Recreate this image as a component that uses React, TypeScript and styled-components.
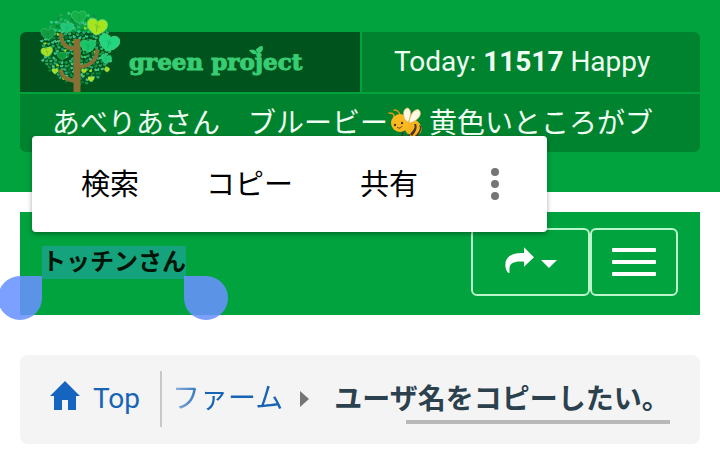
import React from "react";
import styled, { createGlobalStyle } from "styled-components";

const GlobalStyle = createGlobalStyle`
  *, *::before, *::after { box-sizing: border-box; }
  body {
    margin: 0;
    background: #fff;
    color: #000;
    font-family: Roboto, "Noto Sans CJK JP", sans-serif;
    font-size: 28px;
    line-height: 40px;
    overflow-x: hidden;
  }
  button { font: inherit; color: inherit; margin: 0; cursor: pointer; }
  svg { display: block; flex: none; }
`;

const Page = styled.div`
  position: relative;
`;

const Header = styled.header`
  background: #00a33e;
  padding: 32px 20px 40px;
`;

const Panel = styled.div`
  display: grid;
  grid-template-columns: 1fr 1fr;
  grid-template-rows: 60px 58px;
  gap: 2px;
  border-radius: 6px;
  color: #effff2;
`;

const panelColor = "#00832f";

const Brand = styled.a`
  display: flex;
  align-items: flex-end;
  gap: 9px;
  height: 60px;
  padding-left: 20px;
  margin-right: -1px;
  background: #00531d;
  border-top-left-radius: 6px;
  text-decoration: none;
`;

const BrandName = styled.span`
  position: relative;
  height: 60px;
  color: #39cd73;
  font: bold 23px/60px "DejaVu Serif", serif;
  -webkit-text-stroke: 1px #39cd73;
  white-space: nowrap;
`;

const Sprout = styled.svg`
  position: absolute;
  left: 69%;
  top: 13px;
`;

const Counter = styled.div`
  margin-left: 1px;
  padding: 0 32px;
  line-height: 60px;
  background: ${panelColor};
  border-top-right-radius: 6px;
  white-space: nowrap;
  overflow: hidden;
`;

const Ticker = styled.div`
  grid-column: 1 / -1;
  display: flex;
  align-items: center;
  padding: 2px 32px 0;
  background: ${panelColor};
  border-radius: 0 0 6px 6px;
  white-space: pre;
  overflow: hidden;
`;

const Main = styled.main`
  padding: 20px;
`;

const NavBar = styled.nav`
  display: flex;
  justify-content: space-between;
  padding: 16px 22px 19px;
  background: #00a33e;
`;

const Selection = styled.span`
  position: relative;
  align-self: flex-start;
  margin-top: 18px;
  background: #15a37d;
  color: #001407;
  font-size: 24px;
  font-weight: 700;
  line-height: 33px;
  white-space: nowrap;
`;

const Handle = styled.span<{ $side: "start" | "end" }>`
  position: absolute;
  top: 30px;
  ${(p) => (p.$side === "start" ? "right: 100%;" : "left: 100%; margin-left: -2px;")}
  width: 44px;
  height: 44px;
  background: rgba(105, 146, 255, 0.87);
  border-radius: ${(p) =>
    p.$side === "start" ? "50% 0 50% 50%" : "0 50% 50% 50%"};
`;

const ButtonGroup = styled.div`
  display: flex;
`;

const NavButton = styled.button<{ $width: number }>`
  display: flex;
  align-items: center;
  justify-content: center;
  gap: 7px;
  width: ${(p) => p.$width}px;
  height: 68px;
  padding: 0;
  color: #fff;
  background: transparent;
  border: 2px solid #b9f5cd;
  border-radius: 6px;
`;

const Breadcrumb = styled.nav`
  position: relative;
  display: flex;
  align-items: center;
  margin-top: 40px;
  padding: 16px 30px 17px;
  background: #f4f4f4;
  border-radius: 8px;
  white-space: nowrap;
`;

const Crumb = styled.a<{ $fade?: boolean }>`
  display: flex;
  align-items: center;
  gap: 13px;
  color: #1763b5;
  text-decoration: none;
  ${(p) =>
    p.$fade &&
    "mask-image: linear-gradient(to right, rgba(0,0,0,0.4), #000 32px);"}
`;

const Divider = styled.span`
  width: 2px;
  height: 56px;
  margin: 0 10px 0 20px;
  background: #c5c9ca;
`;

const Current = styled.span`
  margin-left: 25px;
  padding-top: 2px;
  color: #2b414e;
  font-weight: 700;
`;

const ScrollThumb = styled.span`
  position: absolute;
  right: 30px;
  bottom: 20px;
  width: 264px;
  height: 4px;
  background: #b8b8b8;
`;

const ContextMenu = styled.div`
  position: absolute;
  left: 32px;
  top: 136px;
  display: flex;
  align-items: center;
  gap: 67px;
  height: 96px;
  padding: 0 42px 0 49px;
  background: #fff;
  border-radius: 4px;
  box-shadow: 0 2px 5px rgba(0, 0, 0, 0.35);
`;

const MenuButton = styled.button`
  padding: 2px 0 0;
  border: 0;
  background: none;
  color: #000;
  font-size: 29px;
  white-space: nowrap;
`;

const MoreButton = styled(MenuButton)`
  padding: 0;
`;

const HEART = "M0 4.4C-3 3-5.4 1-5.4-1.4-5.4-4.6-1.6-5.2 0-2.8 1.6-5.2 5.4-4.6 5.4-1.4 5.4 1 3 3 0 4.4Z";
const SMALL_COLORS = ["#2fb865", "#0f9f46", "#4ac580", "#168a4a", "#2aa75c", "#3cc491", "#0a7f37", "#23a97a"];

const smallLeaves = Array.from({ length: 300 }, (_, i) => {
  const r = 36 * Math.sqrt((i + 0.5) / 300);
  const a = i * 2.39996;
  return {
    x: 37 + r * Math.cos(a) + ((i * 13) % 5) * 0.4 - 0.8,
    y: 38 + r * Math.sin(a) + ((i * 29) % 7) * 0.3 - 0.9,
    turn: ((i * 67) % 90) - 45,
    color: i % 23 === 7 ? "#98d62c" : SMALL_COLORS[(i * 5 + (i % 3)) % SMALL_COLORS.length],
  };
});

const bigLeaves = [
  { x: 39, y: 7, s: 1.4, c: "#16b04a", r: 0 },
  { x: 8, y: 24, s: 1.3, c: "#109c43", r: 0 },
  { x: 27, y: 18, s: 1.2, c: "#20c779", r: 0 },
  { x: 57, y: 17, s: 1.9, c: "#a5e51f", r: 8 },
  { x: 69, y: 33, s: 1.9, c: "#22d680", r: 15 },
  { x: 48, y: 36, s: 1.4, c: "#19c568", r: 0 },
  { x: 7, y: 42, s: 1.1, c: "#a9de25", r: -10 },
  { x: 22, y: 46, s: 0.9, c: "#0c9b3f", r: 0 },
  { x: 66, y: 49, s: 1, c: "#21cb78", r: 20 },
  { x: 15, y: 61, s: 0.6, c: "#afe22b", r: 0 },
  { x: 51, y: 69, s: 0.6, c: "#b4e52b", r: 0 },
  { x: 44, y: 61, s: 0.5, c: "#b1d92e", r: 0 },
  { x: 67, y: 60, s: 0.5, c: "#b1d92e", r: 0 },
];

const TreeLogo = () => (
  <svg width="80" height="82" viewBox="0 0 80 82" aria-hidden="true">
    {smallLeaves.map((l, i) => (
      <path
        key={i}
        d={HEART}
        fill={l.color}
        transform={`translate(${l.x.toFixed(1)} ${l.y.toFixed(1)}) rotate(${l.turn}) scale(.32)`}
      />
    ))}
    <g fill="none" stroke="#877033" strokeLinecap="round">
      <path d="M37 29V86" strokeWidth="7" strokeLinecap="butt" />
      <path d="M35 39C27 38 21 34 21 25M39 57C50 56 57 50 57 41M35 71C27 70 22 67 21 61" strokeWidth="4" />
    </g>
    {bigLeaves.map((l, i) => (
      <g key={i} transform={`translate(${l.x} ${l.y}) rotate(${l.r}) scale(${l.s})`}>
        <path d={HEART} fill={l.c} stroke="#4fd27a" strokeWidth=".4" />
        <path d="M0-2V3M0 1L1.6-.8M0 0L-1.6-1.4" stroke="#0a7a35" strokeWidth=".3" fill="none" opacity=".45" />
      </g>
    ))}
  </svg>
);

const Bee = () => (
  <svg width="34" height="34" viewBox="0 0 34 34" role="img" aria-label="ミツバチ">
    <g fill="none" stroke="#d89a13" strokeWidth="1.5" strokeLinecap="round">
      <path d="M6 10C6 6 4 6 1 6M12 8C11 4 9 3 6 3" />
    </g>
    <ellipse cx="25" cy="21" rx="9" ry="8" transform="rotate(40 25 21)" fill="#f6b51e" />
    <path d="M26 17C28 20 25 24 22 27L24 29C27 26 30 21 28 17ZM31 18C34 22 29 27 26 30L29 30C32 27 34 22 33 19Z" fill="#4e342e" />
    <circle cx="12" cy="16" r="9" fill="#fbb91f" />
    <path d="M17 13C14 6 16 1 20 1 24 3 23 11 20 15ZM21 15C22 7 27 1 31 3 35 7 30 14 22 16Z" fill="#fff8e6" stroke="#e0b551" strokeWidth=".8" />
    <circle cx="7" cy="18" r="1.2" fill="#4e342e" />
    <circle cx="14" cy="16" r="1.2" fill="#4e342e" />
    <path d="M9 20C11 22 13 21 14 19" fill="none" stroke="#4e342e" strokeWidth="1" />
    <path d="M15 25L14 29M21 27L21 31" stroke="#4e342e" strokeWidth="1.4" />
  </svg>
);

export default function App() {
  return (
    <>
      <GlobalStyle />
      <Page>
        <Header>
          <Panel>
            <Brand href="#">
              <TreeLogo />
              <BrandName>
                green project
                <Sprout width="15" height="10" viewBox="0 0 15 10" aria-hidden="true">
                  <path d="M8 9C4 10 2 8 0 5 4 4 8 5 8 9ZM9 8C6 6 7 3 9 3 10 1 14 0 14 3 14 6 12 8 9 8Z" fill="#39cd73" />
                </Sprout>
              </BrandName>
            </Brand>
            <Counter>
              Today: <b>11517</b> Happy
            </Counter>
            <Ticker>
              <span>あべりあさん　ブルービー</span>
              <Bee />
              <span> 黄色いところがブ</span>
            </Ticker>
          </Panel>
        </Header>

        <Main>
          <NavBar>
            <Selection>
              トッチンさん
              <Handle $side="start" />
              <Handle $side="end" />
            </Selection>
            <ButtonGroup>
              <NavButton $width={119} type="button" aria-label="シェア">
                <svg width="29" height="30" viewBox="0 0 87 90" fill="currentColor">
                  <path d="M57 1L87 31 57 59V44C35 42 16 46 14 60 13 67 13 73 14 77H9C3 70 1 62 1 54 1 28 22 16 57 18Z" />
                </svg>
                <svg width="16" height="12" viewBox="0 0 16 12" fill="currentColor">
                  <path d="M0 4H16L8 12Z" />
                </svg>
              </NavButton>
              <NavButton $width={88} type="button" aria-label="メニュー">
                <svg width="44" height="28" viewBox="0 0 44 28" fill="currentColor">
                  <rect width="44" height="4" rx="1" />
                  <rect y="12" width="44" height="4" rx="1" />
                  <rect y="24" width="44" height="4" rx="1" />
                </svg>
              </NavButton>
            </ButtonGroup>
          </NavBar>

          <Breadcrumb>
            <Crumb href="#">
              <svg width="30" height="36" viewBox="0 0 30 36" fill="#1565c0">
                <path d="M15 0L30 15H26V29H18V19H12V29H4V15H0Z" />
              </svg>
              Top
            </Crumb>
            <Divider />
            <Crumb href="#" $fade>
              ファーム
            </Crumb>
            <svg width="26" height="16" viewBox="0 0 26 16" fill="#757575">
              <path d="M17 0L26 8 17 16Z" />
            </svg>
            <Current>ユーザ名をコピーしたい。</Current>
            <ScrollThumb />
          </Breadcrumb>
        </Main>

        <ContextMenu>
          <MenuButton type="button">検索</MenuButton>
          <MenuButton type="button">コピー</MenuButton>
          <MenuButton type="button">共有</MenuButton>
          <MoreButton type="button" aria-label="その他">
            <svg width="20" height="32" viewBox="0 0 20 32" fill="#757575">
              <circle cx="10" cy="4" r="4" />
              <circle cx="10" cy="16" r="4" />
              <circle cx="10" cy="28" r="4" />
            </svg>
          </MoreButton>
        </ContextMenu>
      </Page>
    </>
  );
}
